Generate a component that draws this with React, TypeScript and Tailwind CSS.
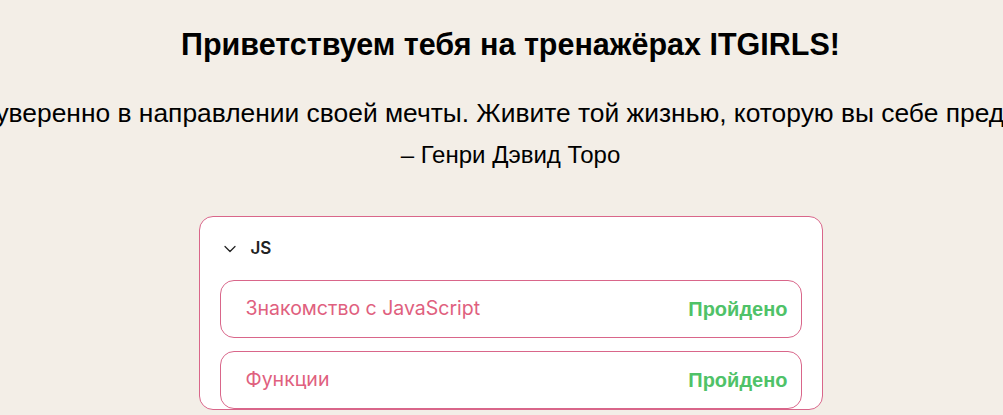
import React from 'react';
import { ChevronDown } from 'lucide-react';

const lessons = [
	{ title: 'Знакомство с JavaScript', status: 'Пройдено' },
	{ title: 'Функции', status: 'Пройдено' },
];

export default function App() {
	return (
		<div className="min-h-[415px] w-full overflow-hidden bg-[#f3eee7] pl-[18px]" style={{ fontFamily: '"Liberation Sans", Arial, sans-serif' }}>
			<div className="flex flex-col items-center pt-[26px]">
				<h1 className="text-[30.5px] font-bold leading-[36px] text-black">
					Приветствуем тебя на тренажёрах ITGIRLS!
				</h1>
				<div className="mt-[36px] flex w-[1100px] justify-center overflow-hidden">
					<p className="whitespace-nowrap pl-[26px] text-[26.4px] leading-[30px] text-black">
						Идите уверенно в направлении своей мечты. Живите той жизнью, которую вы себе представляете.
					</p>
				</div>
				<p className="mt-[12px] text-[24px] leading-[30px] text-black">– Генри Дэвид Торо</p>

				<div className="mt-[46px] w-[624px] rounded-[14px] border border-[#d9668a] bg-white px-[20px] pt-[19px]" style={{ fontFamily: 'Inter, sans-serif' }}>
					<div className="flex items-center gap-[11px]">
						<ChevronDown size={20} strokeWidth={1.5} className="text-[#222]" />
						<span className="text-[17px] font-semibold text-[#222]">JS</span>
					</div>
					<div className="mt-[18px] flex flex-col gap-[13px]">
						{lessons.map((l) => (
							<div key={l.title} className="flex h-[58px] items-center justify-between rounded-[14px] border border-[#d9668a] pl-[25px] pr-[13px]">
								<span className="text-[19.5px] text-[#e0607e]">{l.title}</span>
								<span className="text-[20px] font-bold text-[#4fc268]" style={{ fontFamily: '"Liberation Sans", Arial, sans-serif' }}>
									{l.status}
								</span>
							</div>
						))}
					</div>
				</div>
			</div>
		</div>
	);
}
